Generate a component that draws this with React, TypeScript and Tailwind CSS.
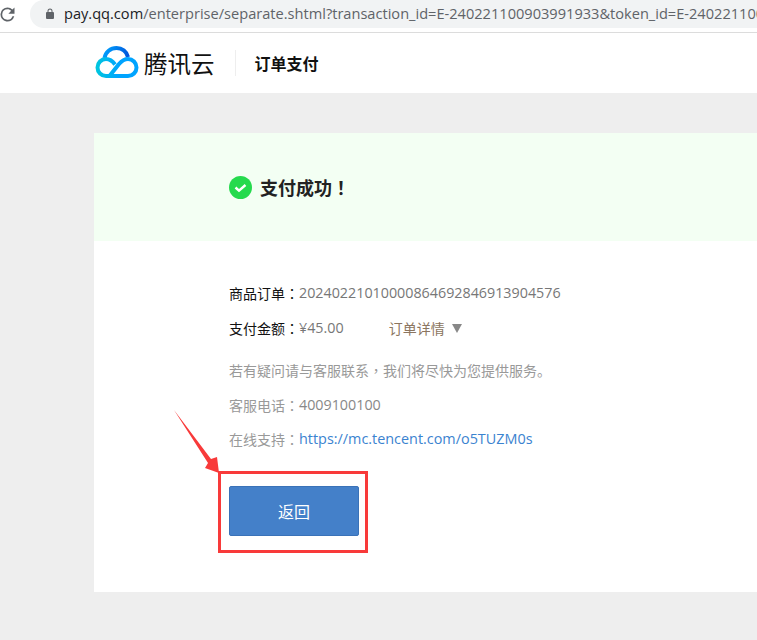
const sans = "font-['Noto_Sans_CJK_SC',sans-serif]";
const latin = "font-['Open_Sans','Noto_Sans_CJK_SC',sans-serif] text-[14.3px]";

// fullwidth punctuation sits centred in its cell in the reference
function Punct({ children }: { children: string }) {
  return <span className="font-['Noto_Sans_CJK_TC',sans-serif]">{children}</span>;
}

function CloudLogo() {
  return (
    <svg width="44" height="34" viewBox="0 0 44 34" fill="none" className="shrink-0">
      <defs>
        <linearGradient id="logoTop" x1="10" y1="0" x2="34" y2="10" gradientUnits="userSpaceOnUse">
          <stop offset="0" stopColor="#00a3ff" />
          <stop offset="1" stopColor="#0052d9" />
        </linearGradient>
        <linearGradient id="logoBottom" x1="0" y1="20" x2="24" y2="20" gradientUnits="userSpaceOnUse">
          <stop offset="0" stopColor="#00c8dc" />
          <stop offset="1" stopColor="#00a4ff" />
        </linearGradient>
      </defs>
      <path d="M9.500 12C10.500 6 15.500 2 21.500 2c5.500 0 10 3.500 11.500 9" stroke="url(#logoTop)" strokeWidth="4" />
      <path
        d="M20 18.500C17.500 15 14.500 13 11 13a8.500 8.500 0 0 0 0 17H33a8.500 8.500 0 0 0 0-17c-3.500 0-6 1.500-9 5L14.500 30"
        stroke="url(#logoBottom)"
        strokeWidth="4"
        strokeLinejoin="round"
      />
    </svg>
  );
}

export default function App() {
  return (
    <div className={`w-[757px] h-[640px] overflow-hidden bg-[#eeeeee] flex flex-col ${sans}`}>
      {/* browser bar */}
      <div className="h-[33px] shrink-0 bg-white border-b border-[#dcdcdc] flex items-start">
        <svg width="21" height="21" viewBox="0 0 24 24" className="mt-[4px] ml-[-3px] shrink-0" fill="#5f6368">
          <path d="M17.65 6.35A7.95 7.95 0 0 0 12 4a8 8 0 1 0 7.740 10h-2.080A6 6 0 1 1 12 6c1.660 0 3.140.690 4.220 1.780L13 11h7V4l-2.350 2.350z" />
        </svg>
        <div className="ml-[12px] flex-1 min-w-0 h-[28px] rounded-l-[14px] bg-[#f1f3f4] flex items-center pl-[14px] whitespace-nowrap overflow-hidden">
          <svg width="12" height="12" viewBox="0 0 24 24" fill="#5f6368" className="shrink-0">
            <path d="M18 8h-1V6a5 5 0 0 0-10 0v2H6a2 2 0 0 0-2 2v10a2 2 0 0 0 2 2h12a2 2 0 0 0 2-2V10a2 2 0 0 0-2-2zM9 6a3 3 0 0 1 6 0v2H9V6z" />
          </svg>
          <span className="ml-[8px] text-[14.6px] text-[#5f6368] font-['Open_Sans','Noto_Sans',sans-serif]">
            <span className="text-[#202124]">pay.qq.com</span>/enterprise/separate.shtml?transaction_id=E-240221100903991933&amp;token_id=E-240221100
          </span>
        </div>
      </div>

      {/* site header */}
      <div className="h-[60px] shrink-0 bg-white flex items-center pl-[95px]">
        <CloudLogo />
        <span className="ml-[5px] pt-[2px] text-[23.500px] leading-none text-[#111111]">腾讯云</span>
        <div className="ml-[20px] w-px h-[26px] bg-[#eeeeee]" />
        <span className="ml-[19px] text-[16px] font-bold text-[#111111]">订单支付</span>
      </div>

      {/* card */}
      <div className="ml-[94px] mt-[40px] w-[663px] h-[459px] bg-white shrink-0">
        <div className="h-[108px] bg-[#f3fff3] flex items-center pl-[135px]">
          <svg width="23" height="23" viewBox="0 0 23 23" className="shrink-0">
            <circle cx="11.5" cy="11.5" r="11.5" fill="#25da4d" />
            <path d="M6.500 11.500l3.500 3.200 6.500-5.700" stroke="#fff" strokeWidth="2.400" fill="none" />
          </svg>
          <span className="ml-[8px] pt-[1px] text-[18px] font-bold text-[#222222]">
            支付成功<Punct>！</Punct>
          </span>
        </div>

        <div className="pl-[135px] pt-[42px] text-[14px]">
          <div className="h-[20px] flex items-center whitespace-nowrap">
            <span className="text-[#111111]">商品订单<Punct>：</Punct></span>
            <span className={`text-[#777777] ${latin}`}>20240221010000864692846913904576</span>
          </div>
          <div className="mt-[15px] h-[20px] flex items-center whitespace-nowrap">
            <span className="text-[#111111]">支付金额<Punct>：</Punct></span>
            <span className={`text-[#777777] ${latin}`}>¥45.00</span>
            <span className="ml-[45px] text-[#8b7560]">订单详情</span>
            <span className="ml-[7px] w-0 h-0 border-x-[5px] border-t-[9px] border-x-transparent border-t-[#888888]" />
          </div>
          <div className="mt-[22px] h-[20px] flex items-center text-[#999999] whitespace-nowrap">
            若有疑问请与客服联系<Punct>，</Punct>我们将尽快为您提供服务。
          </div>
          <div className="mt-[15px] h-[20px] flex items-center text-[#999999] whitespace-nowrap">
            客服电话<Punct>：</Punct><span className={`text-[#888888] ${latin}`}>4009100100</span>
          </div>
          <div className="mt-[14px] h-[20px] flex items-center text-[#999999] whitespace-nowrap">
            在线支持<Punct>：</Punct><span className={`text-[#3b83d0] font-['Open_Sans',sans-serif] text-[14.4px]`}>https://mc.tencent.com/o5TUZM0s</span>
          </div>

          <button className="relative mt-[37px] flex items-center justify-center w-[130px] h-[50px] rounded-[2px] bg-[#4480c9] border border-[#3a72b8] text-[16px] text-white">
            返回
            <span className="absolute left-[-12px] top-[-16px] w-[150px] h-[82px] border-[3px] border-[#f83a3a]" />
            <svg width="46" height="64" viewBox="0 0 46 64" className="absolute left-[-56px] top-[-77px]">
              <path d="M0 0L37 49 43 47 45 63 31 58 34 53z" fill="#f83a3a" />
            </svg>
          </button>
        </div>
      </div>
    </div>
  );
}
